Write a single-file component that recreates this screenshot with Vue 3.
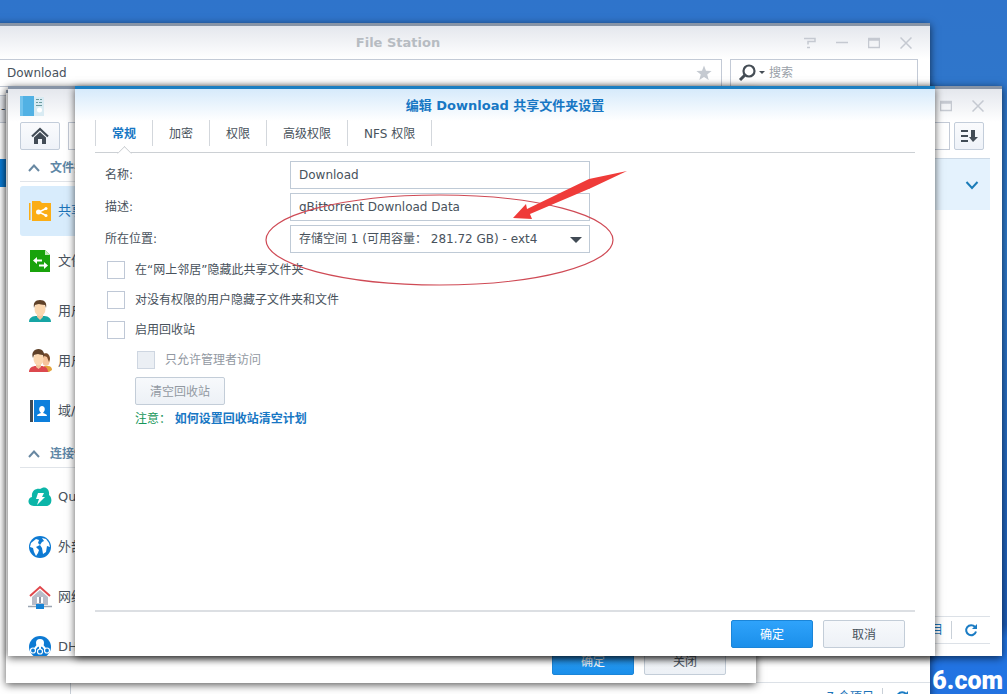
<script setup>
import { ref } from 'vue'

const tabs = ['常规', '加密', '权限', '高级权限', 'NFS 权限']
const activeTab = ref('常规')
const name = ref('Download')
const description = ref('qBittorrent Download Data')
const hideNeighbour = ref(false)
const hideNoAccess = ref(false)
const recycle = ref(false)

const sections = [
  {
    title: '文件共享',
    items: [
      { icon: 'share', label: '共享文件夹', active: true },
      { icon: 'file', label: '文件服务' },
      { icon: 'user', label: '用户帐号' },
      { icon: 'group', label: '用户群组' },
      { icon: 'domain', label: '域/LDAP' }
    ]
  },
  {
    title: '连接性',
    items: [
      { icon: 'cloud', label: 'QuickConnect' },
      { icon: 'globe', label: '外部访问' },
      { icon: 'network', label: '网络' },
      { icon: 'dhcp', label: 'DHCP Server' }
    ]
  }
]
</script>

<template>
  <main class="desktop">
    <section class="window station">
      <header class="titlebar">
        <h2>File Station</h2>
        <div class="controls">
          <button aria-label="帮助"><svg viewBox="0 0 12 12"><path d="M0 1.500h11v3H4v3M3 10.500h3" /></svg></button>
          <button aria-label="最小化"><svg viewBox="0 0 12 12"><path d="M0 5.500h12" /></svg></button>
          <button aria-label="最大化"><svg viewBox="0 0 12 12"><path d="M.5 1.500h11v9h-11zM.5 3h11" /></svg></button>
          <button aria-label="关闭"><svg viewBox="0 0 12 12"><path d="M.5.500l11 11M11.500.500l-11 11" /></svg></button>
        </div>
      </header>
      <div class="station-bar">
        <label class="path">
          <input value="Download" aria-label="路径" />
          <svg viewBox="0 0 16 16" width="16" height="16"><path fill="#c5cad1" d="M8 .5l2 5.300 5.600.2-4.400 3.500 1.500 5.500L8 11.900 3.300 15l1.500-5.500L.4 6l5.600-.2z" /></svg>
        </label>
        <label class="search">
          <svg viewBox="0 0 28 18" width="28" height="18"><circle cx="11" cy="7" r="5.500" fill="none" stroke="#454d55" stroke-width="2.200" /><path d="M7 11L2 16" stroke="#454d55" stroke-width="3" /><path d="M21 7h6l-3 3z" fill="#454d55" /></svg>
          <input placeholder="搜索" aria-label="搜索" />
        </label>
      </div>
      <div class="station-tools"><button aria-label="新增">-</button></div>
      <div class="station-body">
        <div class="tree"><div class="tree-row"></div></div>
        <div class="files">
          <footer class="status">
            <span>7 个项目</span>
            <button aria-label="刷新"><svg viewBox="0 0 14 14" width="14" height="14"><path d="M11 4A5 5 0 1 0 12 8.500" fill="none" stroke="#1b7cc4" stroke-width="2" /><path d="M13 1v5H8z" fill="#1b7cc4" /></svg></button>
          </footer>
        </div>
      </div>
    </section>

    <div class="watermark">6.com</div>

    <section class="window properties">
      <footer class="actions">
        <button class="btn primary">确定</button>
        <button class="btn">关闭</button>
      </footer>
    </section>

    <section class="window panel">
      <header class="titlebar">
        <svg class="panel-icon" viewBox="0 0 24 20" width="24" height="20">
          <path d="M12 1h12v19H12z" fill="#d9ebf3" /><path d="M0 0h14v20H0z" fill="#51b1e4" /><path d="M0 0h3v20H0z" fill="#72c3ed" />
          <path d="M16 3.500h3m1 0h2M16 6.500h2m1 0h3M16 9.500h6" stroke="#6c9a9e" /><circle cx="19.500" cy="14" r="2.500" fill="#fff" />
        </svg>
        <div class="controls">
          <button aria-label="最大化"><svg viewBox="0 0 12 12"><path d="M.5 1.500h11v9h-11zM.5 3h11" /></svg></button>
          <button aria-label="关闭"><svg viewBox="0 0 12 12"><path d="M.5.500l11 11M11.500.500l-11 11" /></svg></button>
        </div>
      </header>
      <div class="panel-bar">
        <button class="home" aria-label="主页"><svg viewBox="0 0 18 18" width="18" height="18"><path d="M1 9.500L9 2l8 7.500" fill="none" stroke="#414b55" stroke-width="2.200" /><path d="M3 10.500l6-5.500 6 5.500V17h-4v-5H7v5H3z" fill="#414b55" /></svg></button>
        <input aria-label="筛选" />
        <button class="sort" aria-label="排序"><svg viewBox="0 0 18 14" width="18" height="14"><path d="M1 2h7M1 7h7M1 12h7" stroke="#414b55" stroke-width="2" /><path d="M11 1h4v7h3l-5 5-4-5h2z" fill="#414b55" /></svg></button>
      </div>
      <div class="panel-body">
        <nav class="sidebar">
          <div v-for="s in sections" :key="s.title" class="group">
            <h3><svg viewBox="0 0 12 8" width="12" height="8"><path d="M1 7l5-5.500L11 7" fill="none" stroke="#6888a2" stroke-width="2" /></svg>{{ s.title }}</h3>
            <a v-for="i in s.items" :key="i.label" href="#" :class="{ active: i.active }">
              <svg viewBox="0 0 24 24" width="24" height="24">
                <g v-if="i.icon === 'share'">
                  <path d="M1 4h1.500v17H1z" fill="#fbad15" /><path d="M4 22V2h8l2 2h9v18z" fill="#fbad15" />
                  <path d="M18 9.500L11 13l7 3.500" fill="none" stroke="#fff" stroke-width="1.500" /><g fill="#fff"><circle cx="10.500" cy="13" r="2.500" /><circle cx="18" cy="9.500" r="1.500" /><circle cx="18" cy="16.500" r="1.500" /></g>
                </g>
                <g v-else-if="i.icon === 'file'">
                  <path d="M2 1h15l5 5v17H2z" fill="#19a30b" /><path d="M17 1v5h5z" fill="#c4eabb" />
                  <path d="M5 11.500l4-3.500v2.500h5v2H9V15zM20 16.500L16 13v2.500h-5v2h5V20z" fill="#fff" />
                </g>
                <g v-else-if="i.icon === 'user'">
                  <path d="M1 23c0-5 4-6 8-6h6c4 0 8 1 8 6z" fill="#16a5a4" /><path d="M9 14h6v4l-3 3-3-3z" fill="#f2c69d" /><ellipse cx="12" cy="10" rx="5.500" ry="7" fill="#fbd7b0" /><path d="M6 9C5 4 7 1 12 1s7 3 6 8l-1-3c-3 0-5-1-6-1-2 0-3 1-4 1z" fill="#5f4129" />
                </g>
                <g v-else-if="i.icon === 'group'">
                  <ellipse cx="18" cy="11" rx="4" ry="6" fill="#f6c49b" /><path d="M14 6c3-3 8-2 8 4l-1 3-2-5z" fill="#764a2a" /><path d="M16 17h4c3 0 4 2 4 4l-3 2h-4z" fill="#e3a43c" />
                  <path d="M1 23c0-4 3-6 7-6h5c4 0 7 2 7 6z" fill="#dc484e" /><path d="M8 14h5v4l-2.500 2L8 18z" fill="#f2c69d" /><ellipse cx="10.500" cy="10" rx="5" ry="6.500" fill="#fbd7b0" /><path d="M5 9C3 4 6 0 10.500 0S17 4 16 9l-1-3c-3 0-4-1-5-1-2 0-3 1-4 1z" fill="#5f4129" />
                </g>
                <g v-else-if="i.icon === 'domain'">
                  <path d="M2 1h3v22H2z" fill="#414b55" /><path d="M6 1h16v22H6z" fill="#0d7fdc" /><path d="M9 17c0-2 2-2 4-3-3-3-2-7 1-7s4 4 1 7c2 1 4 1 4 3z" fill="#fff" />
                </g>
                <g v-else-if="i.icon === 'cloud'">
                  <path d="M6 21C-1 21-1 13 4 12 3 5 9 3 12 4c5-4 10 0 9 6 4 3 3 11-3 11z" fill="#0bb5a8" /><path d="M10 8h6l-2 4h3l-8 8 2-6H8z" fill="#fff" />
                </g>
                <g v-else-if="i.icon === 'globe'">
                  <circle cx="12" cy="12" r="11" fill="#0d7ad3" /><path d="M3 8l5-4 3 1-1 3 2 2-4 2 3 3-1 3-2 3-2-4-1-4-3-1zM14 3l4 1 3 4 1 4-3-1-1 6-3 2-1-6-2-3 2-3 2-1z" fill="#fff" />
                </g>
                <g v-else-if="i.icon === 'network'">
                  <path d="M4 12l8-7 8 7v8H4z" fill="#b8bcc8" /><path d="M2 11l10-9 10 9" fill="none" stroke="#e0474c" stroke-width="2" /><path d="M9 12h6v6H9z" fill="#fff" /><path d="M11 12h2v6h-2z" fill="#8e94a5" /><path d="M0 21.500h24" stroke="#9aa5b3" stroke-width="1.500" /><path d="M8 19h8v5H8z" fill="#1482d6" />
                </g>
                <g v-else>
                  <circle cx="12" cy="12" r="11" fill="#0d7ad3" /><circle cx="12" cy="8" r="4" fill="#fff" /><path d="M12 8v8M10 10l-5 6M14 10l5 6" stroke="#fff" stroke-width="2" /><g fill="#0d7ad3" stroke="#fff" stroke-width="1.200"><circle cx="5" cy="15.500" r="2.500" /><circle cx="12" cy="16.500" r="2.500" /><circle cx="19" cy="15.500" r="2.500" /></g>
                </g>
              </svg>
              {{ i.label }}
            </a>
          </div>
        </nav>
        <div class="content">
          <div class="share-row"><svg viewBox="0 0 14 10" width="14" height="10"><path d="M1.500 2L7 8l5.500-6" fill="none" stroke="#1b7cb8" stroke-width="2" /></svg></div>
          <footer class="status">
            <span>7 个项目</span>
            <button aria-label="刷新"><svg viewBox="0 0 14 14" width="14" height="14"><path d="M11 4A5 5 0 1 0 12 8.500" fill="none" stroke="#1b7cc4" stroke-width="2" /><path d="M13 1v5H8z" fill="#1b7cc4" /></svg></button>
          </footer>
        </div>
      </div>
    </section>

    <section class="window dialog" role="dialog" aria-labelledby="dialog-title">
      <h1 id="dialog-title">编辑 Download 共享文件夹设置</h1>
      <div class="tabs" role="tablist">
        <button v-for="t in tabs" :key="t" role="tab" :aria-selected="t === activeTab" :class="{ active: t === activeTab }" @click="activeTab = t">{{ t }}</button>
      </div>
      <form class="form" @submit.prevent>
        <div class="field"><label for="name">名称:</label><input id="name" v-model="name" /></div>
        <div class="field"><label for="desc">描述:</label><input id="desc" v-model="description" /></div>
        <div class="field">
          <label for="place">所在位置:</label>
          <div class="select">
            <select id="place"><option>存储空间 1 (可用容量： 281.72 GB) - ext4</option></select>
            <svg viewBox="0 0 12 6" width="12" height="6"><path d="M0 0h12L6 6z" fill="#414b55" /></svg>
          </div>
        </div>
        <label class="check"><input v-model="hideNeighbour" type="checkbox" />在“网上邻居”隐藏此共享文件夹</label>
        <label class="check"><input v-model="hideNoAccess" type="checkbox" />对没有权限的用户隐藏子文件夹和文件</label>
        <label class="check"><input v-model="recycle" type="checkbox" />启用回收站</label>
        <div class="nested">
          <label class="check disabled"><input type="checkbox" disabled />只允许管理者访问</label>
          <button class="btn empty" disabled>清空回收站</button>
          <p class="note"><span>注意：</span> <a href="#">如何设置回收站清空计划</a></p>
        </div>
      </form>
      <footer class="actions">
        <button class="btn primary">确定</button>
        <button class="btn">取消</button>
      </footer>
    </section>

    <svg class="annotation" viewBox="0 0 370 124" width="370" height="124" aria-hidden="true">
      <ellipse cx="179.500" cy="74" rx="173.500" ry="45" fill="none" stroke="#cf4a55" stroke-width="1.200" />
      <path d="M253 52l13-14 1 5L329 13l38-8-36 17L270 48l2 5z" fill="#ef3b39" />
    </svg>
  </main>
</template>

<style>
html,
body {
  overflow: hidden;
}
</style>

<style scoped>
* {
  box-sizing: border-box;
}
.desktop {
  position: relative;
  height: 100vh;
  overflow: hidden;
  color: #48525c;
  font: 12px/18px "DejaVu Sans", "Noto Sans CJK SC", sans-serif;
  background: linear-gradient(#2f74cb 0, #2f7acb 35%, #1d5db8 90%, #2276e6 92%, #2272e0 100%);
}
button,
input,
select {
  font: inherit;
  color: inherit;
  margin: 0;
}
h1,
h2,
h3,
p {
  margin: 0;
}
button {
  cursor: pointer;
}
a {
  text-decoration: none;
}
.window {
  position: absolute;
  display: flex;
  flex-direction: column;
  overflow: hidden;
  background: #fff;
  border-top: 3px solid #8794a6;
  box-shadow: 0 2px 8px rgba(0, 0, 0, 0.65);
}
.station {
  inset: 23px 77px -18px -134px;
}
.properties {
  inset: 90px 251px 11px 6px;
  justify-content: flex-end;
}
.panel {
  inset: 86px 5px 38px 8px;
}
.dialog {
  inset: 86px 72px 38px 75px;
  border-top-color: #1c7fc2;
  background: linear-gradient(#d6eafb, #fff 32px);
}
.titlebar {
  display: flex;
  align-items: center;
  flex: none;
  height: 33px;
  padding: 0 18px 0 12px;
  background: linear-gradient(#e4e7ed, #fff);
}
.titlebar h2 {
  flex: 1;
  padding-left: 114px;
  text-align: center;
  font-size: 13px;
  color: #b7bcc2;
}
.controls {
  display: flex;
  gap: 20px;
  margin-left: auto;
}
.controls button {
  width: 12px;
  height: 12px;
  padding: 0;
  border: 0;
  background: none;
}
.controls svg {
  display: block;
  fill: none;
  stroke: #c5c9d1;
  stroke-width: 1.5;
}
.station-bar {
  display: flex;
  gap: 8px;
  padding-right: 12px;
}
.path,
.search {
  display: flex;
  align-items: center;
  height: 28px;
  border: 1px solid #c3cad6;
  background: #fff;
}
.path {
  flex: 1;
  padding: 0 9px 0 140px;
}
.search {
  width: 188px;
  padding-left: 7px;
}
.station-bar input {
  flex: 1;
  min-width: 0;
  padding: 0;
  border: 0;
  outline: 0;
}
.search input {
  padding-left: 3px;
}
.search input::placeholder {
  color: #9a9fa8;
}
.station-tools {
  padding: 8px 0 36px 100px;
}
.station-tools button {
  width: 60px;
  height: 28px;
  padding: 0 20px 0 34px;
  text-align: left;
  border: 1px solid #c3cad6;
  background: #e8ebf0;
}
.station-body {
  flex: 1;
  display: flex;
}
.tree {
  width: 205px;
  border-right: 1px solid #c9d0d8;
}
.tree-row {
  height: 28px;
  background: #0b7bd3;
}
.files,
.content {
  flex: 1;
  display: flex;
  flex-direction: column;
}
.status {
  display: flex;
  align-items: center;
  justify-content: flex-end;
  flex: none;
  height: 28px;
  margin-top: auto;
  border-top: 1px solid #dce1e7;
  border-bottom: 1px solid #dce1e7;
  color: #1b73b8;
}
.status span {
  padding-right: 8px;
  border-right: 1px solid #c9d0d8;
}
.status button {
  display: flex;
  margin: 0 12px;
  padding: 0;
  border: 0;
  background: none;
}
.files .status {
  height: 30px;
  padding-right: 9px;
}
.watermark {
  position: absolute;
  right: 4px;
  bottom: 0;
  color: #fff;
  font: 900 25px/27px Roboto, sans-serif;
}
.panel-bar {
  display: flex;
  flex: none;
  padding: 0 18px 0 12px;
}
.panel-bar input {
  flex: 1;
  height: 28px;
  margin: 0 4px 0 8px;
  border: 1px solid #c3cad6;
}
.panel-bar button {
  display: flex;
  align-items: center;
  justify-content: center;
  height: 28px;
  padding: 0;
  border: 1px solid #c3cdda;
  border-radius: 2px;
  background: linear-gradient(#fafbfd, #eef2f8);
}
.home {
  width: 40px;
}
.sort {
  width: 30px;
}
.panel-body {
  flex: 1;
  display: flex;
  min-height: 0;
  padding-right: 12px;
}
.sidebar {
  width: 240px;
  padding: 4px 0 0 12px;
  overflow: hidden;
}
.group {
  margin-bottom: 4px;
}
.sidebar h3 {
  display: flex;
  align-items: center;
  gap: 10px;
  height: 28px;
  margin-bottom: 4px;
  padding-left: 8px;
  border-bottom: 1px solid #e0e4e9;
  color: #5f87a6;
  font-size: 12px;
}
.sidebar a {
  display: flex;
  align-items: center;
  gap: 6px;
  height: 50px;
  padding-left: 8px;
  border-radius: 3px;
  color: #48525c;
  font-size: 13px;
}
.sidebar a.active {
  background: #d8ecfc;
  color: #1b73b8;
}
.content {
  padding: 8px 0 12px;
}
.share-row {
  display: flex;
  align-items: center;
  justify-content: flex-end;
  height: 52px;
  padding-right: 11px;
  border-top: 1px solid #ccd9e6;
  background: #e4f2fd;
}
.dialog h1 {
  height: 31px;
  line-height: 33px;
  text-align: center;
  font-size: 13px;
  color: #1777c4;
}
.tabs {
  display: flex;
  flex: none;
  margin: 0 20px;
  padding-bottom: 6px;
  border-bottom: 1px solid #ccd0d4;
}
.tabs button {
  position: relative;
  height: 26px;
  padding: 2px 16px 0;
  border: solid #d3d7dc;
  border-width: 0 0 0 1px;
  background: none;
}
.tabs button:last-child {
  border-right-width: 1px;
}
.tabs .active {
  color: #1777c4;
  font-weight: bold;
}
.tabs .active::after {
  content: "";
  position: absolute;
  left: 50%;
  bottom: -13px;
  width: 10px;
  height: 10px;
  margin-left: -5px;
  border: solid #ccd0d4;
  border-width: 1px 0 0 1px;
  background: #fff;
  transform: rotate(45deg);
  clip-path: polygon(0 0, 100% 0, 0 100%);
}
.form {
  flex: 1;
  padding: 8px 30px 0;
}
.field {
  display: flex;
  align-items: center;
  margin-bottom: 4px;
}
.field > label {
  width: 185px;
}
.field > input,
.select {
  width: 300px;
}
.field > input,
.select select {
  height: 28px;
  padding: 0 8px;
  border: 1px solid #bfcad6;
  border-radius: 0;
  background: #fff;
}
.select {
  position: relative;
}
.select select {
  width: 100%;
  appearance: none;
}
.select svg {
  position: absolute;
  right: 8px;
  top: 12px;
  pointer-events: none;
}
.check {
  display: flex;
  align-items: center;
  gap: 10px;
  height: 30px;
  padding-left: 2px;
}
.field + .check {
  margin-top: -2px;
}
.check input {
  appearance: none;
  width: 18px;
  height: 18px;
  border: 1px solid #bfc8d6;
  background: #fff;
}
.check input:checked {
  background: #1b86dd;
}
.check.disabled {
  color: #9299a2;
}
.check.disabled input {
  background: #ebeff4;
  border-color: #ced6e1;
}
.nested {
  padding-left: 30px;
}
.btn {
  width: 82px;
  height: 28px;
  padding: 2px 0 0;
  border: 1px solid #c3cdd8;
  border-radius: 2px;
  background: linear-gradient(#f7f9fc, #edf1f6);
}
.btn.primary {
  border-color: #1b85d8;
  background: linear-gradient(#2fa3fb, #1b8fea);
  color: #fff;
}
.btn.empty {
  display: block;
  width: 90px;
  margin-top: 2px;
  color: #9299a2;
}
.note {
  margin-top: 5px;
  color: #16965a;
}
.note a {
  color: #1777c4;
  font-weight: bold;
}
.actions {
  display: flex;
  justify-content: flex-end;
  gap: 10px;
  flex: none;
  margin: 0 20px;
  padding: 8px 10px;
  border-top: 2px solid #dcdfe3;
}
.annotation {
  position: absolute;
  left: 260px;
  top: 166px;
  pointer-events: none;
}
</style>
